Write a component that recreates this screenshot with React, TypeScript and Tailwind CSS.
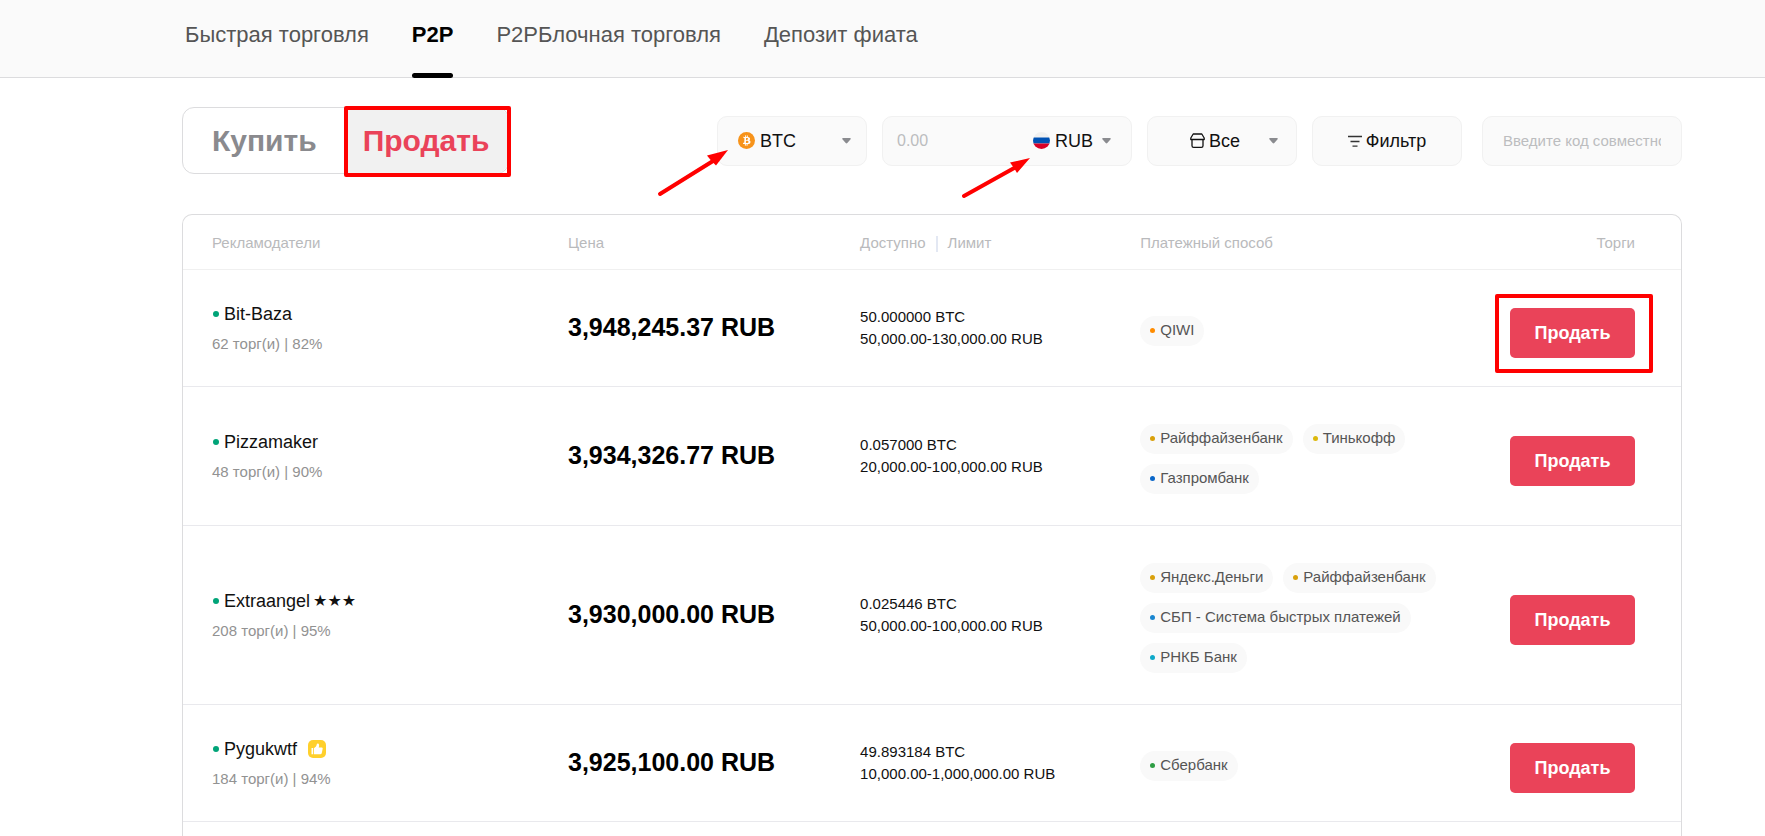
import type { ReactNode } from "react";

const tabs = [
  { label: "Быстрая торговля", active: false },
  { label: "P2P", active: true },
  { label: "P2PБлочная торговля", active: false },
  { label: "Депозит фиата", active: false },
];

const offers = [
  {
    name: "Bit-Baza",
    stars: "",
    recommended: false,
    stats: "62 торг(и) | 82%",
    price: "3,948,245.37 RUB",
    available: "50.000000 BTC",
    limit: "50,000.00-130,000.00 RUB",
    methods: [{ label: "QIWI", dot: "bg-[#ff8c00]" }],
    highlighted: true,
  },
  {
    name: "Pizzamaker",
    stars: "",
    recommended: false,
    stats: "48 торг(и) | 90%",
    price: "3,934,326.77 RUB",
    available: "0.057000 BTC",
    limit: "20,000.00-100,000.00 RUB",
    methods: [
      { label: "Райффайзенбанк", dot: "bg-[#d9a00b]" },
      { label: "Тинькофф", dot: "bg-[#dcb80c]" },
      { label: "Газпромбанк", dot: "bg-[#0a66c8]" },
    ],
    highlighted: false,
  },
  {
    name: "Extraangel",
    stars: "★★★",
    recommended: false,
    stats: "208 торг(и) | 95%",
    price: "3,930,000.00 RUB",
    available: "0.025446 BTC",
    limit: "50,000.00-100,000.00 RUB",
    methods: [
      { label: "Яндекс.Деньги", dot: "bg-[#d9a00b]" },
      { label: "Райффайзенбанк", dot: "bg-[#d9a00b]" },
      { label: "СБП - Система быстрых платежей", dot: "bg-[#1a86d0]" },
      { label: "РНКБ Банк", dot: "bg-[#0fa9c9]" },
    ],
    highlighted: false,
  },
  {
    name: "Pygukwtf",
    stars: "",
    recommended: true,
    stats: "184 торг(и) | 94%",
    price: "3,925,100.00 RUB",
    available: "49.893184 BTC",
    limit: "10,000.00-1,000,000.00 RUB",
    methods: [{ label: "Сбербанк", dot: "bg-[#2e9e44]" }],
    highlighted: false,
  },
];

function Caret() {
  return (
    <svg width="9" height="6" viewBox="0 0 9 6" className="shrink-0" aria-hidden="true">
      <path d="M1 0h7c.8 0 1 .8.6 1.3L5.3 5.1c-.4.5-1.2.5-1.6 0L.4 1.3C0 .8.2 0 1 0Z" fill="#8a8b8f" />
    </svg>
  );
}

function BitcoinIcon() {
  return (
    <svg width="17" height="17" viewBox="0 0 32 32" className="shrink-0" aria-hidden="true">
      <circle cx="16" cy="16" r="16" fill="#f7931a" />
      <path
        d="M23.19 14.02c.31-2.1-1.29-3.23-3.47-3.98l.71-2.84-1.73-.43-.69 2.76-1.38-.33.69-2.77-1.72-.43-.71 2.83-1.1-.26-2.38-.59-.46 1.85s1.28.29 1.26.31c.7.17.82.64.8 1l-.8 3.23.18.06-.18-.04-1.13 4.53c-.09.21-.3.53-.79.41.02.02-1.26-.31-1.26-.31l-.86 1.98 2.25.56 1.23.32-.71 2.87 1.72.43.71-2.84 1.38.36-.7 2.82 1.72.43.72-2.86c2.95.56 5.16.33 6.1-2.34.75-2.14-.04-3.38-1.59-4.19 1.13-.26 1.98-1 2.21-2.53Zm-3.95 5.54c-.53 2.15-4.15.99-5.32.7l.95-3.81c1.17.29 4.93.87 4.37 3.11Zm.54-5.57c-.49 1.95-3.5.96-4.48.71l.86-3.45c.98.24 4.12.7 3.62 2.74Z"
        fill="#fff"
        transform="rotate(-12 16 16)"
      />
    </svg>
  );
}

function RussiaIcon() {
  return (
    <svg width="17" height="17" viewBox="0 0 17 17" className="shrink-0" aria-hidden="true">
      <clipPath id="flag">
        <circle cx="8.5" cy="8.5" r="8.5" />
      </clipPath>
      <g clipPath="url(#flag)">
        <path d="M0 0h17v5.5H0z" fill="#f0f0f0" />
        <path d="M0 5.5h17v6H0z" fill="#0052b4" />
        <path d="M0 11.5h17V17H0z" fill="#d80027" />
      </g>
    </svg>
  );
}

function PaymentIcon() {
  return (
    <svg width="15" height="17" viewBox="0 0 15 17" fill="none" stroke="#111" className="shrink-0" aria-hidden="true">
      <path d="M3.2 2h8.6l2.4 4v1.500H.8V6z" strokeWidth="1.3" strokeLinejoin="round" />
      <path d="M2 7.500v6.200c0 1 .7 1.600 1.600 1.600h7.800c.9 0 1.600-.6 1.600-1.600V7.500" strokeWidth="1.3" />
    </svg>
  );
}

function FilterIcon() {
  return (
    <svg width="14" height="12" viewBox="0 0 14 12" stroke="#333" strokeWidth="1.3" className="shrink-0" aria-hidden="true">
      <path d="M0 1.500h14M2.500 6.500h9M4.500 11.200h5" />
    </svg>
  );
}

function ThumbBadge() {
  return (
    <svg width="18" height="18" viewBox="0 0 18 18" className="ml-[11px] shrink-0" aria-label="Рекомендуем">
      <rect width="18" height="18" rx="5" fill="#ffd02c" />
      <path
        d="M3.500 8h1.600v6.200H3.500zM5.900 8.300C7.800 7.200 8.600 5.800 8.800 4.300c.2-1.300 2.300-1.200 2.300.9 0 .8-.2 1.500-.4 2.200h2.900c.8 0 1.200.6 1.100 1.200l-.9 4.500c-.1.700-.6 1.100-1.200 1.100H5.900z"
        fill="#fff"
      />
    </svg>
  );
}

function Arrow({ shaft, head, className }: { shaft: string; head: string; className: string }) {
  return (
    <svg width="72" height="48" viewBox="0 0 72 48" className={className} aria-hidden="true">
      <path d={shaft} stroke="#f00" strokeWidth="4" strokeLinecap="round" />
      <path d={head} fill="#f00" />
    </svg>
  );
}

const box = "h-[50px] rounded-[10px] border border-[#f1f1f1] bg-[#fafafa]";

function SelectBox({
  label,
  value,
  icon,
  className,
}: {
  label: string;
  value: string;
  icon: ReactNode;
  className: string;
}) {
  return (
    <label className={`flex items-center ${className}`}>
      {icon}
      <select aria-label={label} className="min-w-0 flex-1 appearance-none bg-transparent text-lg outline-none">
        <option>{value}</option>
      </select>
      <Caret />
    </label>
  );
}

export default function App() {
  return (
    <div className="flex min-h-screen flex-col bg-white font-['Liberation_Sans',Arial,sans-serif] text-[#111]">
      <header className="border-b border-[#dcdcde] bg-[#fafafa] pr-[83px] pl-[185px]">
        <nav className="flex h-[77px] gap-[43px] text-[22px]">
          {tabs.map((tab) => (
            <a
              key={tab.label}
              href="#"
              className={
                tab.active
                  ? "relative pt-[18px] font-bold text-black"
                  : "relative pt-[18px] text-[#555]"
              }
            >
              {tab.label}
              {tab.active && <span className="absolute inset-x-0 -bottom-px h-[5px] rounded-full bg-black" />}
            </a>
          ))}
        </nav>
      </header>

      <main className="flex flex-1 flex-col pt-[29px] pr-[83px] pl-[182px]">
        {/* Buy / sell switch and filters */}
        <div className="flex items-center justify-between">
          <div className="flex h-[67px] rounded-xl border border-[#dcdcde] text-[30px] font-bold">
            <button className="pr-[30px] pl-[29px] text-[#8a8a8e]">Купить</button>
            <button className="relative rounded-r-xl bg-[#f1f1f1] pr-[19px] pl-4 text-[#ea4359]">
              Продать
              <span className="absolute -inset-x-[3px] -top-[2px] -bottom-1 rounded-xs border-4 border-[#f00]" />
            </button>
          </div>

          <div className="flex gap-[15px]">
            <div className="relative">
              <SelectBox
                label="Криптовалюта"
                value="BTC"
                icon={<span className="mr-[5px]"><BitcoinIcon /></span>}
                className={`w-[150px] pr-[15px] pl-5 ${box}`}
              />
              <Arrow
                shaft="M3 45 56 12"
                head="M71 1 50 6.500l4 5L59 16.500Z"
                className="absolute top-[33px] -left-[60px]"
              />
            </div>

            <div className={`relative flex w-[250px] items-center pr-5 pl-[14px] ${box}`}>
              <input
                aria-label="Сумма"
                placeholder="0.00"
                className="w-[136px] bg-transparent text-base outline-none placeholder:text-[#bcbdbf]"
              />
              <SelectBox
                label="Валюта"
                value="RUB"
                icon={<span className="mr-[5px]"><RussiaIcon /></span>}
                className="flex-1"
              />
              <Arrow
                shaft="M3 39 55 10"
                head="M69 1 49 5.500l4 5.500L56 16Z"
                className="absolute top-10 left-[78px]"
              />
            </div>

            <SelectBox
              label="Способ оплаты"
              value="Все"
              icon={<span className="mr-1"><PaymentIcon /></span>}
              className={`w-[150px] pr-[18px] pl-[42px] ${box}`}
            />

            <button className={`flex w-[150px] items-center justify-center gap-1 text-lg ${box}`}>
              <FilterIcon />
              Фильтр
            </button>

            <input
              aria-label="Код"
              placeholder="Введите код совместного использования"
              className={`ml-[5px] w-[200px] px-5 text-[15px] outline-none placeholder:text-[#bcbdbf] ${box}`}
            />
          </div>
        </div>

        {/* Offers */}
        <div className="mt-10 flex-1 rounded-t-[10px] border border-b-0 border-[#dcdcde]">
          <table className="w-full table-fixed">
            <thead>
              <tr className="h-[54px] border-b border-[#f0f0f0] text-left text-[15px] text-[#b9babc]">
                <th className="w-[25.7%] pt-[3px] pl-[29px] font-normal">Рекламодатели</th>
                <th className="w-[19.5%] pt-[3px] font-normal">Цена</th>
                <th className="w-[18.7%] pt-[3px] font-normal">
                  Доступно
                  <span className="mx-[10px] inline-block h-4 w-[2px] bg-[#e3e8f3] align-middle" />
                  Лимит
                </th>
                <th className="w-[21%] pt-[3px] font-normal">Платежный способ</th>
                <th className="pt-[3px] pr-[46px] text-right font-normal">Торги</th>
              </tr>
            </thead>
            <tbody>
              {offers.map((offer) => (
                <tr key={offer.name} className="h-[117px] border-b border-[#e9e9ed]">
                  <td className="pt-[2px] pl-[29px]">
                    <div className="flex items-center text-lg leading-[29px]">
                      <span className="mr-[5px] ml-px size-[6px] rounded-full bg-[#00a478]" />
                      {offer.name}
                      {offer.stars && (
                        <span className="ml-[3px] font-['DejaVu_Sans',sans-serif] text-base">{offer.stars}</span>
                      )}
                      {offer.recommended && <ThumbBadge />}
                    </div>
                    <p className="text-[15px] leading-[29px] text-[#929292]">{offer.stats}</p>
                  </td>
                  <td className="text-[25px] font-bold text-black">{offer.price}</td>
                  <td className="text-[15px] leading-[22px]">
                    <p>{offer.available}</p>
                    <p>{offer.limit}</p>
                  </td>
                  <td className="pt-[37px] pb-[31px]">
                    <ul className="flex flex-wrap gap-[10px]">
                      {offer.methods.map((method) => (
                        <li
                          key={method.label}
                          className="flex h-[30px] items-center gap-[5px] rounded-full bg-[#f9f9f9] px-[10px] text-[15px] text-[#555]"
                        >
                          <span className={`size-[5px] rounded-full ${method.dot}`} />
                          {method.label}
                        </li>
                      ))}
                    </ul>
                  </td>
                  <td className="pt-[10px] pr-[46px] text-right">
                    <button className="relative h-[50px] w-[125px] rounded-[5px] bg-[#ea4359] text-lg font-bold text-white">
                      Продать
                      {offer.highlighted && (
                        <span className="absolute -top-[14px] -right-[18px] -bottom-[15px] -left-[15px] rounded-xs border-4 border-[#f00]" />
                      )}
                    </button>
                  </td>
                </tr>
              ))}
            </tbody>
          </table>
        </div>
      </main>
    </div>
  );
}
